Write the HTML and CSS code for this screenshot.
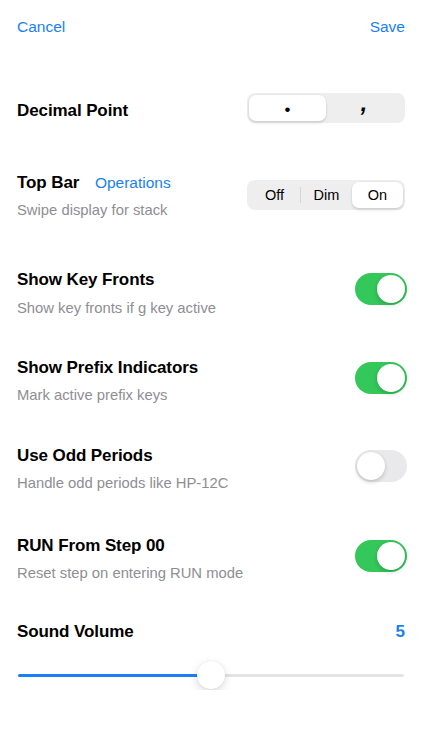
FILE: index.html
```html
<!DOCTYPE html>
<html>
<head>
<meta charset="utf-8">
<link rel="stylesheet" href="styles.css">
</head>
<body>
<div class="page">
  <div class="header">
    <span class="link">Cancel</span>
    <span class="link">Save</span>
  </div>

  <div class="row row-decimal">
    <div class="text"><div class="title">Decimal Point</div></div>
    <div class="seg seg-decimal">
      <div class="seg-item selected"><span class="dot">•</span></div>
      <div class="seg-item"><span class="comma">,</span></div>
    </div>
  </div>

  <div class="row row-topbar">
    <div class="text">
      <div class="title">Top Bar <span class="inline-link">Operations</span></div>
      <div class="sub">Swipe display for stack</div>
    </div>
    <div class="seg seg-three">
      <div class="seg-item">Off</div>
      <div class="seg-sep"></div>
      <div class="seg-item">Dim</div>
      <div class="seg-item selected">On</div>
    </div>
  </div>

  <div class="row row-keyfronts">
    <div class="text">
      <div class="title">Show Key Fronts</div>
      <div class="sub sub-wide">Show key fronts if g key active</div>
    </div>
    <div class="toggle on"><div class="knob"></div></div>
  </div>

  <div class="row row-mid">
    <div class="text">
      <div class="title">Show Prefix Indicators</div>
      <div class="sub">Mark active prefix keys</div>
    </div>
    <div class="toggle on"><div class="knob"></div></div>
  </div>

  <div class="row row-odd">
    <div class="text">
      <div class="title">Use Odd Periods</div>
      <div class="sub">Handle odd periods like HP-12C</div>
    </div>
    <div class="toggle off"><div class="knob"></div></div>
  </div>

  <div class="row row-run">
    <div class="text">
      <div class="title">RUN From Step 00</div>
      <div class="sub">Reset step on entering RUN mode</div>
    </div>
    <div class="toggle on"><div class="knob"></div></div>
  </div>

  <div class="row row-sound">
    <div class="title">Sound Volume</div>
    <div class="value">5</div>
  </div>

  <div class="slider">
    <div class="track"><div class="fill" style="width:50%"></div></div>
    <div class="thumb" style="left:50%"></div>
  </div>
</div>
</body>
</html>
```

FILE: styles.css
```css
* { box-sizing: border-box; }
html, body {
  margin: 0;
  padding: 0;
  background: #ffffff;
}
body {
  font-family: "Liberation Sans", Arial, sans-serif;
  color: #000;
}
.page {
  width: 422px;
  padding: 0 17px;
}
.header {
  height: 54px;
  display: flex;
  justify-content: space-between;
  align-items: center;
}
.link {
  color: #1a7ff5;
  font-size: 15.5px;
}
.row {
  display: flex;
  justify-content: space-between;
  align-items: flex-start;
}
.text {
  display: flex;
  flex-direction: column;
}
.title {
  font-size: 17px;
  font-weight: 700;
  line-height: 24px;
  letter-spacing: -0.1px;
}
.inline-link {
  color: #1a7ff5;
  font-weight: 400;
  font-size: 15.5px;
  margin-left: 11px;
  letter-spacing: 0;
}
.sub {
  font-size: 14.8px;
  line-height: 18px;
  color: #8e8e93;
  margin-top: 6px;
}
.sub-wide { margin-top: 7px; }
.row-decimal { margin-top: 39px; }
.row-decimal .text { margin-top: 6px; }
.row-topbar { margin-top: 48px; }
.row-topbar .seg { margin-top: 9px; }
.row-keyfronts { margin-top: 49px; }
.row-keyfronts .toggle { margin-top: 5px; }
.row-mid { margin-top: 39px; }
.row-odd { margin-top: 40px; }
.row-run { margin-top: 42px; }
.row-sound { margin-top: 38px; }

.seg {
  width: 158px;
  height: 30px;
  background: #eeeeef;
  border-radius: 8px;
  padding: 2px;
  display: flex;
  align-items: center;
}
.seg-item {
  flex: 1;
  height: 26px;
  display: flex;
  align-items: center;
  justify-content: center;
  font-size: 14.5px;
  font-weight: 400;
  border-radius: 7px;
  color: #000;
}
.seg-item.selected {
  background: #fff;
  box-shadow: 0 2px 3px rgba(0,0,0,0.12), 0 0 0 0.5px rgba(0,0,0,0.04);
}
.seg-sep {
  width: 1px;
  height: 16px;
  background: #d6d6d8;
}
.dot {
  font-size: 17px;
  line-height: 1;
  transform: translateY(1px);
  display: inline-block;
}
.comma {
  font-size: 24px;
  font-weight: 700;
  line-height: 1;
  transform: translateY(-5px) skewX(-10deg);
  display: inline-block;
}

.toggle {
  width: 52px;
  height: 32px;
  border-radius: 16px;
  position: relative;
  margin-top: 6px;
  margin-right: -2px;
}
.toggle.on { background: #34c759; }
.toggle.off { background: #e9e9eb; }
.knob {
  position: absolute;
  top: 2px;
  width: 28px;
  height: 28px;
  border-radius: 50%;
  background: #fff;
  box-shadow: 0 2px 4px rgba(0,0,0,0.18), 0 0 1px rgba(0,0,0,0.1);
}
.toggle.on .knob { right: 2px; }
.toggle.off .knob { left: 2px; }

.value {
  color: #1a7ff5;
  font-size: 17px;
  font-weight: 700;
  line-height: 24px;
}

.slider {
  position: relative;
  margin-top: 16px;
  height: 30px;
  margin-left: 1px;
  margin-right: 1px;
}
.track {
  position: absolute;
  left: 0;
  right: 0;
  top: 14px;
  height: 3px;
  background: #e4e4e6;
  border-radius: 2px;
}
.fill {
  height: 3px;
  background: #1a7ff5;
  border-radius: 2px;
}
.thumb {
  position: absolute;
  top: 1px;
  width: 28px;
  height: 28px;
  margin-left: -14px;
  border-radius: 50%;
  background: #fff;
  box-shadow: 0 3px 8px rgba(0,0,0,0.15), 0 0 1px rgba(0,0,0,0.12);
}
```
